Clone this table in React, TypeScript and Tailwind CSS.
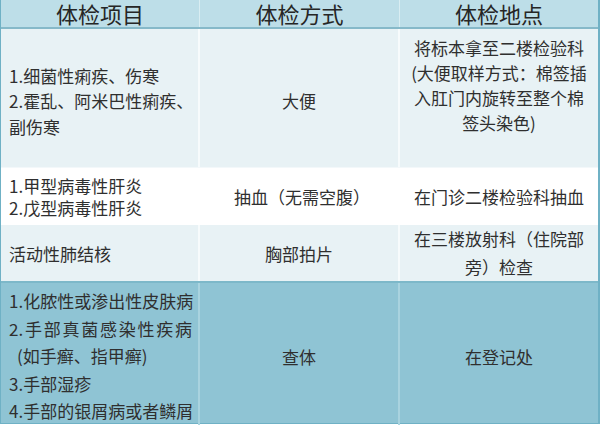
import type React from "react"

const font = { fontFamily: '"Noto Sans CJK SC", "Microsoft YaHei", sans-serif' }

interface CellProps {
  children: React.ReactNode
  className?: string
}

const Cell: React.FC<CellProps> = ({ children, className = "" }) => (
  <div className={`flex text-[#2f2f2f] ${className}`}>{children}</div>
)

export default function App() {
  return (
    <div className="w-[600px] h-[427px] bg-white" style={font}>
      <div className="w-[600px] border-l border-r-2 border-b border-[#6fb1c5] grid grid-cols-[199px_200px_198px] text-[17px]">
        {/* header */}
        <div className="col-span-3 grid grid-cols-subgrid h-[29px] bg-[#bddee8] border-b-2 border-[#86b9c9] text-[22px] leading-[27px] text-[#262626]">
          <div className="text-center border-r border-[#d9edf2]">体检项目</div>
          <div className="text-center border-r border-[#d9edf2]">体检方式</div>
          <div className="text-center">体检地点</div>
        </div>

        {/* row 1 */}
        <div className="col-span-3 grid grid-cols-subgrid h-[139px] bg-[#e8f2f5] border-b border-[#f3f8fa]">
          <Cell className="flex-col justify-center pl-[8px] pt-[6px] leading-[25.5px] border-r-2 border-[#f7fbfc]">
            <div>1.细菌性痢疾、伤寒</div>
            <div>2.霍乱、阿米巴性痢疾、</div>
            <div>副伤寒</div>
          </Cell>
          <Cell className="items-center justify-center pt-[6px] border-r-2 border-[#f7fbfc]">大便</Cell>
          <Cell className="flex-col items-center pt-[6px] leading-[25px] text-center">
            <div>将标本拿至二楼检验科</div>
            <div>(大便取样方式：棉签插</div>
            <div>入肛门内旋转至整个棉</div>
            <div>签头染色)</div>
          </Cell>
        </div>

        {/* row 2 */}
        <div className="col-span-3 grid grid-cols-subgrid h-[57px] bg-white">
          <Cell className="flex-col justify-center pl-[8px] leading-[22px]">
            <div>1.甲型病毒性肝炎</div>
            <div>2.戊型病毒性肝炎</div>
          </Cell>
          <Cell className="items-center justify-center pl-[4px]">抽血（无需空腹）</Cell>
          <Cell className="items-center justify-center">在门诊二楼检验科抽血</Cell>
        </div>

        {/* row 3 */}
        <div className="col-span-3 grid grid-cols-subgrid h-[58px] bg-[#e8f2f5] border-b-2 border-[#7db8c9]">
          <Cell className="items-center pl-[8px] pt-[2px] border-r-2 border-[#f7fbfc]">活动性肺结核</Cell>
          <Cell className="items-center justify-center pt-[2px] border-r-2 border-[#f7fbfc]">胸部拍片</Cell>
          <Cell className="flex-col justify-center items-center leading-[28px] text-center">
            <div>在三楼放射科（住院部</div>
            <div>旁）检查</div>
          </Cell>
        </div>

        {/* row 4 */}
        <div className="col-span-3 grid grid-cols-subgrid h-[140px] bg-[#8fc4d4]">
          <Cell className="flex-col justify-center pl-[8px] pt-[4px] leading-[27.5px] text-[#1f2f35] border-r-2 border-[#a9d3df]">
            <div>1.化脓性或渗出性皮肤病</div>
            <div className="flex justify-between pr-[6px]">
              {["2.", "手", "部", "真", "菌", "感", "染", "性", "疾", "病"].map((c, i) => (
                <span key={i}>{c}</span>
              ))}
            </div>
            <div className="pl-[8px]">(如手癣、指甲癣)</div>
            <div>3.手部湿疹</div>
            <div>4.手部的银屑病或者鳞屑</div>
          </Cell>
          <Cell className="items-center justify-center pt-[6px] text-[#1f2f35] border-r-2 border-[#a9d3df]">查体</Cell>
          <Cell className="items-center justify-center pt-[6px] text-[#1f2f35]">在登记处</Cell>
        </div>
      </div>
    </div>
  )
}
